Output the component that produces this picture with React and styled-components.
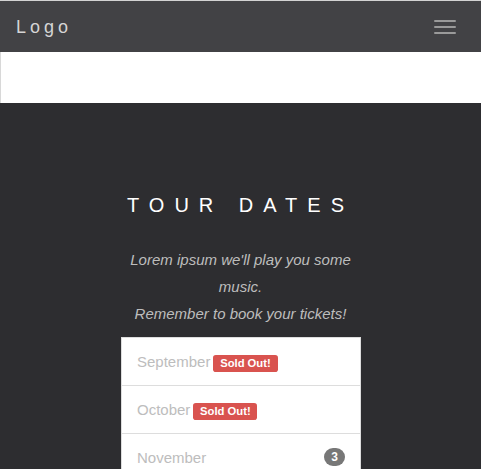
import React from "react";
import styled, { createGlobalStyle } from "styled-components";

const Global = createGlobalStyle`
  html, body {
    margin: 0;
    padding: 0;
    background: #2d2d30;
    font: 400 15px/1.8 "Liberation Sans", Arial, sans-serif;
    color: #bdbdbd;
  }
  * { box-sizing: border-box; }
`;

const Navbar = styled.nav`
  display: flex;
  align-items: center;
  justify-content: space-between;
  height: 52px;
  border-top: 1px solid #d3d3d3;
  background: #424245;
  padding: 0 25px 0 16px;
`;

const Brand = styled.a`
  font-size: 18px;
  line-height: 20px;
  letter-spacing: 4px;
  color: #d5d5d5;
  text-decoration: none;
`;

const Toggle = styled.button`
  display: flex;
  flex-direction: column;
  gap: 4px;
  padding: 0;
  margin-top: 1px;
  border: 0;
  background: transparent;
`;

const IconBar = styled.span`
  display: block;
  width: 22px;
  height: 2px;
  border-radius: 1px;
  background: #9a9a9a;
`;

const Spacer = styled.div`
  height: 51px;
  background: #fff;
  border-left: 1px solid #d8d8d8;
`;

const Section = styled.section`
  padding: 91px 120px 80px;
  background: #2d2d30;
  text-align: center;
`;

const Title = styled.h3`
  margin: 0 0 30px;
  font-size: 20px;
  line-height: 22px;
  font-weight: 400;
  letter-spacing: 10px;
  color: #fff;
`;

const Intro = styled.p`
  margin: 0 0 10px;
  font-style: italic;
  color: #bdbdbd;
`;

const List = styled.ul`
  list-style: none;
  margin: 0;
  padding: 0;
  text-align: left;
`;

const Item = styled.li`
  padding: 10px 15px;
  margin-bottom: -1px;
  margin-left: 1px;
  background: #fff;
  border: 1px solid #ddd;
  color: #bdbdbd;
`;

const Label = styled.span`
  display: inline;
  margin-left: 3px;
  padding: 0.2em 0.6em 0.3em;
  font-size: 75%;
  font-weight: 700;
  line-height: 1;
  color: #fff;
  background: #d9534f;
  border-radius: 0.25em;
  white-space: nowrap;
  vertical-align: baseline;
`;

const Badge = styled.span`
  float: right;
  min-width: 10px;
  margin-top: 4px;
  padding: 3px 7px;
  font-size: 12px;
  font-weight: 700;
  line-height: 1;
  color: #fff;
  background: #777;
  border-radius: 10px;
`;

const months = [
  { name: "September", soldOut: true },
  { name: "October", soldOut: true },
  { name: "November", count: 3 },
];

export default function App() {
  return (
    <>
      <Global />
      <Navbar>
        <Brand href="#">Logo</Brand>
        <Toggle aria-label="menu">
          <IconBar />
          <IconBar />
          <IconBar />
        </Toggle>
      </Navbar>
      <Spacer />
      <Section>
        <Title>TOUR DATES</Title>
        <Intro>
          Lorem ipsum we'll play you some music.
          <br />
          Remember to book your tickets!
        </Intro>
        <List>
          {months.map((m) => (
            <Item key={m.name}>
              {m.count && <Badge>{m.count}</Badge>}
              {m.name}
              {m.soldOut && <Label>Sold Out!</Label>}
            </Item>
          ))}
        </List>
      </Section>
    </>
  );
}
